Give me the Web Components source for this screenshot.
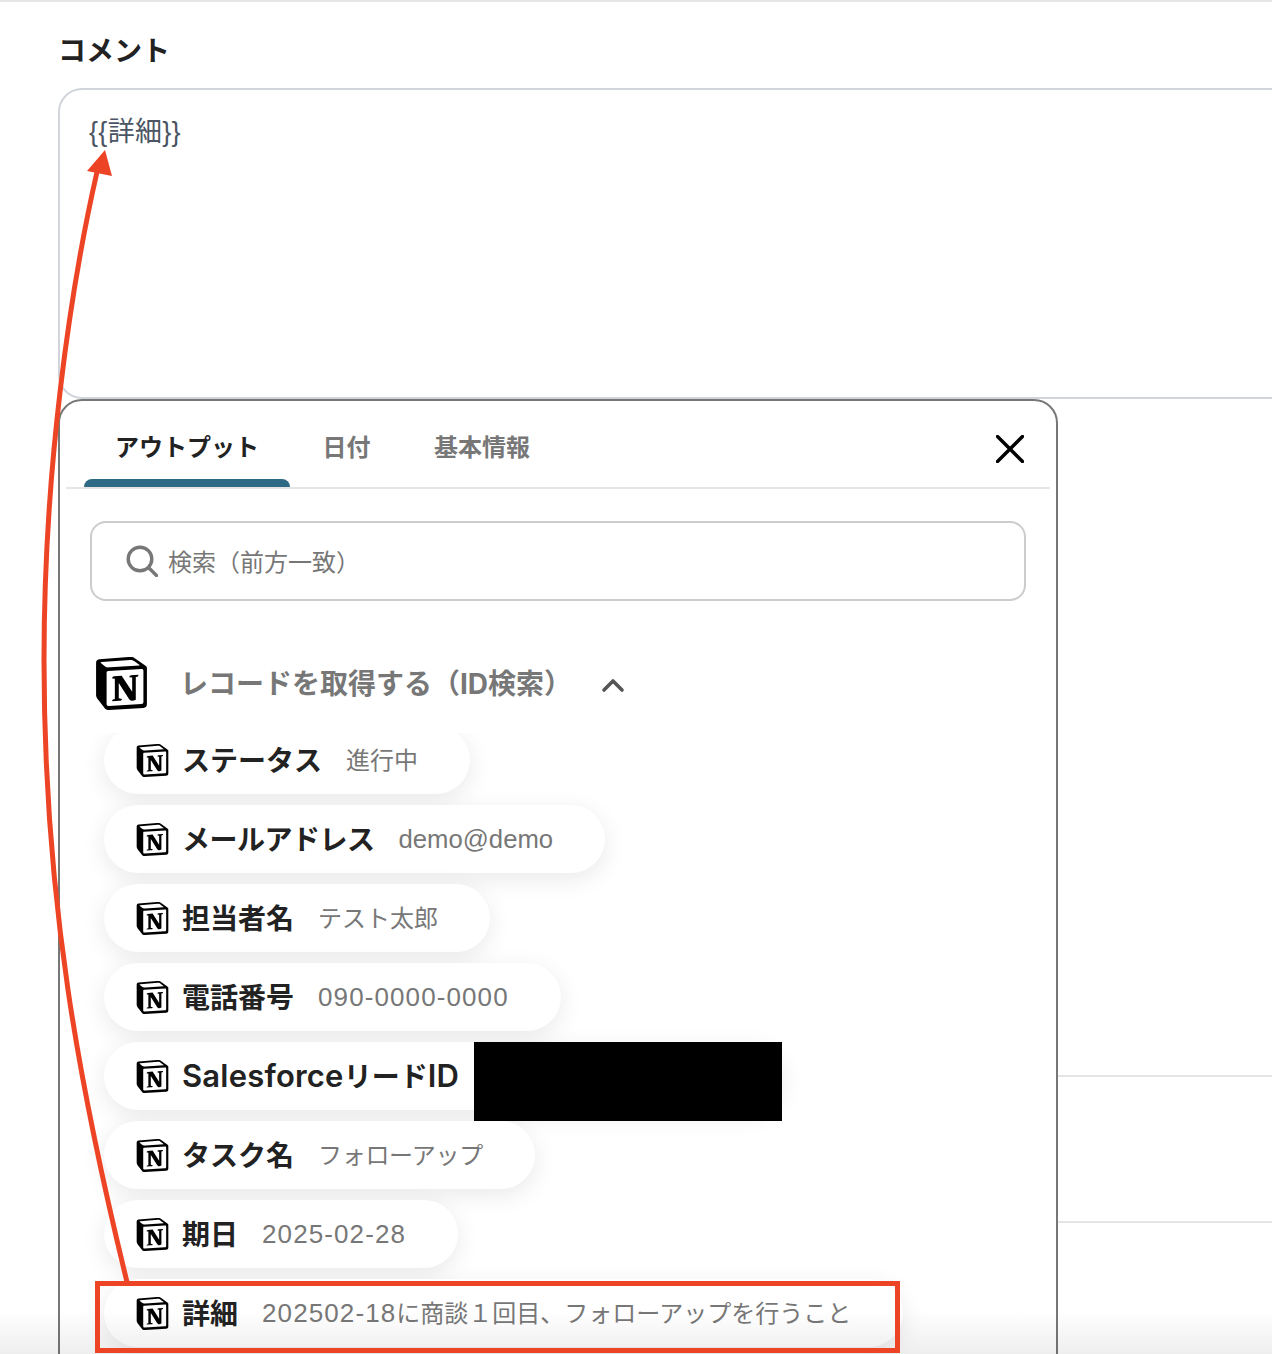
<!DOCTYPE html>
<html lang="ja">
<head>
<meta charset="utf-8">
<title>コメント</title>
<style>
  html, body { margin: 0; padding: 0; background: #fff; }
  body { font-family: "Inter", "Noto Sans CJK JP", sans-serif; }
  /* latin runs are set a bit larger than the kana around them */
  .num { font-family: "Liberation Sans", sans-serif; font-size: 26px; letter-spacing: 1.1px; }
  .lat { font-family: "Liberation Sans", sans-serif; font-size: 25.7px; }
  .lat-b { font-size: 31px; font-weight: 600; letter-spacing: .2px; }
</style>
</head>
<body>
<comment-page>
  <comment-field label="コメント">{{詳細}}</comment-field>
  <form-line style="margin-top:676px"></form-line>
  <form-line style="margin-top:144px"></form-line>

  <output-popup slot="overlay">
    <popup-tabs>
      <popup-tab active>アウトプット</popup-tab>
      <popup-tab>日付</popup-tab>
      <popup-tab>基本情報</popup-tab>
    </popup-tabs>
    <search-box placeholder="検索（前方一致）"></search-box>
    <section-head>レコードを取得する（ID検索）</section-head>
    <pill-list>
      <output-pill><span slot="label">ステータス</span>進行中</output-pill>
      <output-pill style="--value-lift:0px"><span slot="label" style="letter-spacing:-.5px">メールアドレス</span><span class="lat">demo@demo</span></output-pill>
      <output-pill><span slot="label">担当者名</span>テスト太郎</output-pill>
      <output-pill style="--value-lift:0px"><span slot="label">電話番号</span><span class="num">090-0000-0000</span></output-pill>
      <output-pill style="--pill-min:678px"><span slot="label"><span class="lat-b">Salesforce</span>リード<span class="lat-b">ID</span></span></output-pill>
      <output-pill><span slot="label">タスク名</span><span style="letter-spacing:-.3px">フォローアップ</span></output-pill>
      <output-pill style="--value-lift:0px"><span slot="label">期日</span><span class="num">2025-02-28</span></output-pill>
      <output-pill><span slot="label">詳細</span><span class="num">202502-18</span>に商談１回目、フォローアップを行うこと</output-pill>
    </pill-list>
  </output-popup>

  <annotation-layer slot="overlay"></annotation-layer>
</comment-page>

<script>
const NOTION_PATH = "M4.459 4.208c.746.606 1.026.56 2.428.466l13.215-.793c.28 0 .047-.28-.046-.326L17.86 1.968c-.42-.326-.981-.7-2.055-.607L3.01 2.295c-.466.046-.56.28-.374.466zm.793 3.08v13.904c0 .747.373 1.027 1.214.98l14.523-.84c.841-.046.935-.56.935-1.167V6.354c0-.606-.233-.933-.748-.887l-15.177.887c-.56.047-.747.327-.747.933zm14.337.745c.093.42 0 .84-.42.888l-.7.14v10.264c-.608.327-1.168.514-1.635.514-.748 0-.935-.234-1.495-.933l-4.577-7.186v6.952L12.21 19s0 .84-1.168.84l-3.222.186c-.093-.186 0-.653.327-.746l.84-.233V9.854L7.822 9.76c-.094-.42.14-1.026.793-1.073l3.456-.233 4.764 7.279v-6.44l-1.215-.139c-.093-.514.28-.887.747-.933zM1.936 1.035l13.31-.98c1.634-.14 2.055-.047 3.082.7l4.249 2.986c.7.513.934.653.934 1.213v16.378c0 1.026-.373 1.634-1.68 1.726l-15.458.934c-.98.047-1.448-.093-1.962-.747l-3.129-4.06c-.56-.747-.793-1.306-.793-1.96V2.667c0-.839.374-1.54 1.447-1.632z";

function notionIcon(size) {
  return `<svg width="${size}" height="${size}" viewBox="0 0 24 24" fill="#000" style="display:block;flex:none"><rect x="2" y="2" width="20" height="20" fill="#fff"/><path fill-rule="evenodd" d="${NOTION_PATH}"/></svg>`;
}

class ShadowBase extends HTMLElement {
  constructor(html) {
    super();
    this.attachShadow({ mode: "open" });
    this.shadowRoot.innerHTML = html;
  }
}

class CommentPage extends ShadowBase {
  constructor() {
    super(`
    <style>
    :host{
      display: block;
      position: relative;
      height: 1354px;
      overflow: hidden;
      box-sizing: border-box;
      border-top: 2px solid #e5e5e5;
      padding: 0 0 0 58px;
      background: #fff;
      font-family: "Inter", "Noto Sans CJK JP", sans-serif;
    }
    .fade{
      position: absolute;
      left: 0; right: 0; bottom: 0;
      height: 44px;
      background: linear-gradient(to bottom, rgba(0,0,0,0), rgba(0,0,0,.065));
      pointer-events: none;
      z-index: 5;
    }
    </style>
    <slot></slot>
    <slot name="overlay"></slot>
    <div class="fade"></div>
    `);
  }
}
customElements.define("comment-page", CommentPage);

class CommentField extends ShadowBase {
  constructor() {
    super(`
    <style>
    :host{ display: block; width: 1300px; }
    .label{
      height: 86px;
      box-sizing: border-box;
      padding-top: 30px;
      font-size: 28px;
      line-height: 38px;
      font-weight: 700;
      color: #222;
    }
    .box{
      box-sizing: border-box;
      height: 311px;
      border: 2px solid #d1d5db;
      border-radius: 24px;
      padding: 24px 29px;
      font-family: "Liberation Sans", "Noto Sans CJK JP", sans-serif;
      font-size: 27px;
      letter-spacing: .3px;
      line-height: 36px;
      color: #4b5563;
    }
    </style>
    <div class="label"></div>
    <div class="box"><slot></slot></div>
    `);
    this.shadowRoot.querySelector(".label").textContent = this.getAttribute("label");
  }
}
customElements.define("comment-field", CommentField);

class FormLine extends ShadowBase {
  constructor() {
    super(`<style>:host{ display:block; height:2px; background:#e5e5e5; }</style>`);
  }
}
customElements.define("form-line", FormLine);

class OutputPopup extends ShadowBase {
  constructor() {
    super(`
    <style>
    :host{
      position: absolute;
      left: 58px;
      top: 397px;
      width: 1000px;
      height: 1000px;
      box-sizing: border-box;
      border: 2px solid #777;
      border-radius: 24px;
      background: #fff;
      overflow: hidden;
      z-index: 2;
    }
    </style>
    <slot></slot>
    `);
  }
}
customElements.define("output-popup", OutputPopup);

class PopupTabs extends ShadowBase {
  constructor() {
    super(`
    <style>
    :host{
      display: flex;
      align-items: stretch;
      justify-content: space-between;
      height: 86px;
      margin: 0 6px;
      padding-left: 18px;
      border-bottom: 2px solid #e5e5e5;
    }
    .tabs{ display: flex; gap: 1.5px; }
    .close{
      align-self: flex-start;
      margin: 34px 26px 0 0;
      width: 28px;
      height: 28px;
    }
    svg{ display: block; }
    </style>
    <div class="tabs"><slot></slot></div>
    <div class="close">
      <svg width="28" height="28" viewBox="0 0 28 28" fill="none" stroke="#000" stroke-width="3.4" stroke-linecap="round"><path d="M1.5 1.5 26.5 26.5M26.5 1.5 1.5 26.5"/></svg>
    </div>
    `);
  }
}
customElements.define("popup-tabs", PopupTabs);

class PopupTab extends ShadowBase {
  constructor() {
    super(`
    <style>
    :host{
      display: block;
      position: relative;
      padding: 29px 31px 0;
      font-size: 24px;
      line-height: 36px;
      font-weight: 700;
      color: #777;
      white-space: nowrap;
    }
    :host([active]){ color: #222; }
    :host([active])::after{
      content: "";
      position: absolute;
      left: 0; right: 0; bottom: 0;
      height: 8px;
      background: #2e6a86;
      border-radius: 8px 8px 0 0;
    }
    </style>
    <slot></slot>
    `);
  }
}
customElements.define("popup-tab", PopupTab);

class SearchBox extends ShadowBase {
  constructor() {
    super(`
    <style>
    :host{
      display: flex;
      align-items: center;
      gap: 10px;
      box-sizing: border-box;
      width: 936px;
      height: 80px;
      margin: 32px 0 0 30px;
      padding-left: 34px;
      border: 2px solid #ccc;
      border-radius: 16px;
      font-size: 24px;
      color: #777;
    }
    svg{ display: block; flex: none; }
    .ph{ margin-bottom: 2px; }
    </style>
    <svg width="32" height="32" viewBox="0 0 32 32" fill="none" stroke="#777" stroke-width="3.4" stroke-linecap="round"><circle cx="14" cy="14" r="11.8"/><path d="M23 23 30.5 30.5"/></svg>
    <span class="ph"></span>
    `);
    this.shadowRoot.querySelector(".ph").textContent = this.getAttribute("placeholder");
  }
}
customElements.define("search-box", SearchBox);

class SectionHead extends ShadowBase {
  constructor() {
    super(`
    <style>
    :host{
      display: flex;
      align-items: center;
      height: 54px;
      margin: 55px 0 0 35px;
      font-size: 28px;
      font-weight: 700;
      color: #777;
    }
    .text{ margin: 0 0 2px 32px; white-space: nowrap; }
    .chev{ margin: 4px 0 0 29px; display: block; }
    </style>
    ${notionIcon(53)}
    <span class="text"><slot></slot></span>
    <svg class="chev" width="24" height="16" viewBox="0 0 24 16" fill="none" stroke="#555" stroke-width="3.6" stroke-linecap="round" stroke-linejoin="round"><path d="M3 13 12 4 21 13"/></svg>
    `);
  }
}
customElements.define("section-head", SectionHead);

class PillList extends ShadowBase {
  constructor() {
    super(`
    <style>
    :host{
      display: block;
      height: 640px;
      margin-top: 23px;
      overflow: hidden;
    }
    .inner{
      display: flex;
      flex-direction: column;
      align-items: flex-start;
      gap: 11px;
      margin-top: -7px;
      padding-left: 44px;
    }
    </style>
    <div class="inner"><slot></slot></div>
    `);
  }
}
customElements.define("pill-list", PillList);

class OutputPill extends ShadowBase {
  constructor() {
    super(`
    <style>
    :host{
      display: flex;
      align-items: center;
      box-sizing: border-box;
      height: 68px;
      min-width: var(--pill-min, 0);
      padding: 0 52px 0 32px;
      border-radius: 34px;
      background: #fff;
      box-shadow: 0 6px 24px rgba(0,0,0,.09);
      white-space: nowrap;
    }
    .label{
      margin: 0 0 2px 13px;
      font-size: 28px;
      font-weight: 700;
      color: #222;
    }
    .value{
      margin: 0 0 var(--value-lift, 4px) 24px;
      font-size: 24px;
      color: #777;
    }
    </style>
    ${notionIcon(33)}
    <span class="label"><slot name="label"></slot></span>
    <span class="value"><slot></slot></span>
    `);
  }
}
customElements.define("output-pill", OutputPill);

class AnnotationLayer extends ShadowBase {
  constructor() {
    super(`
    <style>
    :host{
      position: absolute;
      left: 0; top: -2px;
      width: 1272px;
      height: 1354px;
      pointer-events: none;
      z-index: 6;
    }
    svg{ position: absolute; left: 0; top: 0; }
    .redact{
      position: absolute;
      left: 474px; top: 1042px;
      width: 308px; height: 79px;
      background: #000;
    }
    </style>
    <div class="redact"></div>
    <svg width="1272" height="1354" viewBox="0 0 1272 1354" fill="none">
      <path d="M127 1282C80 1090 44 900 44 660C44 470 70 290 97 172" stroke="#ee4426" stroke-width="5"/>
      <path d="M105 150 87 171 112 176Z" fill="#ee4426"/>
      <rect x="97.5" y="1283.5" width="800" height="67" stroke="#ee4426" stroke-width="5"/>
    </svg>
    `);
  }
}
customElements.define("annotation-layer", AnnotationLayer);
</script>
</body>
</html>
